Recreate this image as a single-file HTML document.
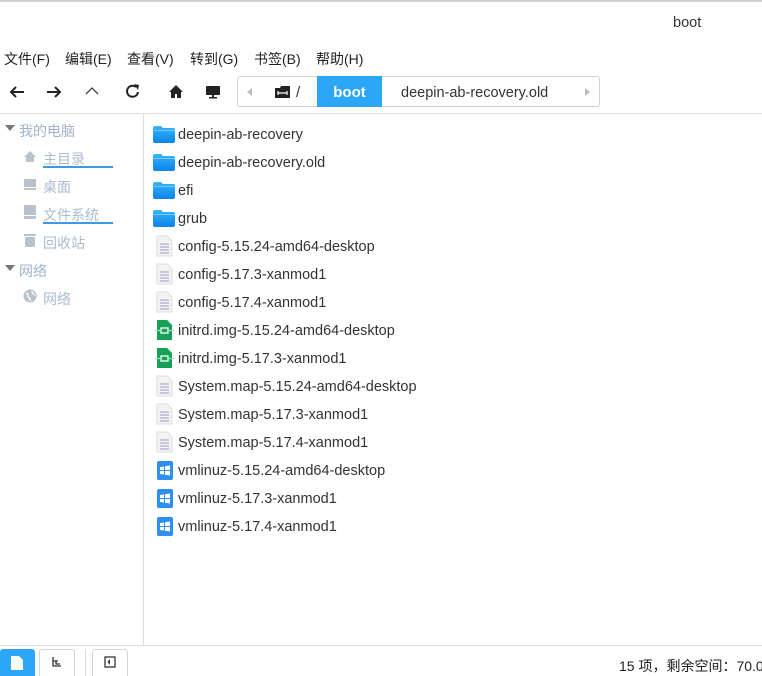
<!DOCTYPE html>
<html><head><meta charset="utf-8"><style>
*{margin:0;padding:0;box-sizing:border-box}
body{width:762px;height:676px;overflow:hidden;background:#fff;font-family:"Liberation Sans","Noto Sans CJK SC",sans-serif;color:#303030;position:relative}
.a{position:absolute}
.menu span{position:absolute;top:49px;font-size:14px;color:#222}
.row{position:absolute;left:153px;height:28px;display:flex;align-items:center;font-size:14.5px;color:#333}
.row span{position:relative;top:1px}
.row svg{margin-right:3px}
.side{position:absolute;font-size:14px;color:#a8bcd0;display:flex;align-items:center}
</style></head><body>
<div class="a" style="left:0;top:0;width:762px;height:2px;background:#cfcfcf"></div>
<div class="a" style="left:673px;top:15px;font-size:14.5px;color:#333">boot</div>
<div class="menu">
<span style="left:4px">文件(F)</span><span style="left:65px">编辑(E)</span><span style="left:127px">查看(V)</span><span style="left:190px">转到(G)</span><span style="left:254px">书签(B)</span><span style="left:316px">帮助(H)</span>
</div>
<svg class="a" style="left:8px;top:84px" width="18" height="16"><path d="M16 8H3M8 3L3 8L8 13" stroke="#222" stroke-width="2" fill="none"/></svg>
<svg class="a" style="left:45px;top:84px" width="18" height="16"><path d="M2 8H15M10 3L15 8L10 13" stroke="#222" stroke-width="2" fill="none"/></svg>
<svg class="a" style="left:84px;top:86px" width="16" height="10"><path d="M2 8L8 2L14 8" stroke="#444" stroke-width="1.3" fill="none"/></svg>
<svg class="a" style="left:125px;top:83px" width="16" height="17"><path d="M13 9A5.5 5.5 0 1 1 11 4" stroke="#222" stroke-width="2" fill="none"/><path d="M9 1L14 2L13 7Z" fill="#222"/></svg>
<svg class="a" style="left:168px;top:84px" width="16" height="15"><path d="M8 1L1 8H3V14H7V10H9V14H13V8H15Z" fill="#222"/></svg>
<svg class="a" style="left:205px;top:85px" width="16" height="14"><rect x="1" y="1" width="14" height="9" rx="1" fill="#222"/><rect x="7" y="10" width="2" height="2" fill="#222"/><rect x="4" y="12" width="8" height="1.5" fill="#222"/></svg>
<div class="a" style="left:237px;top:76px;width:363px;height:31px;border:1px solid #d0d0d0;border-radius:3px;background:#fff"></div>
<svg class="a" style="left:246px;top:87px" width="8" height="10"><path d="M6 1L1 5L6 9Z" fill="#bbb"/></svg>
<svg class="a" style="left:274px;top:85px" width="17" height="14"><path d="M1 3H6L7 1H16V13H1Z" fill="#222"/><path d="M4 8H13M4 6V10M13 6V10" stroke="#fff" stroke-width="1.2"/></svg>
<div class="a" style="left:296px;top:84px;font-size:15px;color:#333">/</div>
<div class="a" style="left:317px;top:76px;width:65px;height:31px;background:#2ca7f8;color:#fff;font-size:15px;font-weight:bold;display:flex;align-items:center;justify-content:center;padding-top:2px">boot</div>
<div class="a" style="left:401px;top:85px;font-size:14.5px;color:#333">deepin-ab-recovery.old</div>
<svg class="a" style="left:583px;top:87px" width="8" height="10"><path d="M2 1L7 5L2 9Z" fill="#bbb"/></svg>
<div class="a" style="left:0;top:113px;width:762px;height:1px;background:#ddd"></div>
<div class="a" style="left:143px;top:114px;width:1px;height:532px;background:#ddd"></div>
<svg class="a" style="left:5px;top:125px" width="10" height="7"><path d="M0 0H10L5 6Z" fill="#777"/></svg>
<div class="side" style="left:19px;top:121px;color:#9fb4c9">我的电脑</div>
<svg class="a" style="left:23px;top:150px" width="14" height="13"><path d="M7 1L1 7H3V12H11V7H13Z" fill="#b8c2cc"/></svg>
<div class="side" style="left:43px;top:149px">主目录</div>
<div class="a" style="left:43px;top:166px;width:70px;height:2px;background:#3a9ae8"></div>
<svg class="a" style="left:23px;top:178px" width="14" height="13"><rect x="1" y="1" width="12" height="11" rx="1" fill="#b8c2cc"/><rect x="1" y="9" width="12" height="1" fill="#fff"/></svg>
<div class="side" style="left:43px;top:177px">桌面</div>
<svg class="a" style="left:24px;top:205px" width="12" height="15"><rect x="0" y="0" width="12" height="14" rx="1" fill="#b8c2cc"/><rect x="0" y="10" width="12" height="1" fill="#fff"/></svg>
<div class="side" style="left:43px;top:205px">文件系统</div>
<div class="a" style="left:43px;top:222px;width:70px;height:2px;background:#3a9ae8"></div>
<svg class="a" style="left:23px;top:233px" width="14" height="15"><rect x="1" y="1" width="12" height="2" fill="#b8c2cc"/><rect x="2" y="4" width="10" height="10" rx="1" fill="#b8c2cc"/></svg>
<div class="side" style="left:43px;top:233px">回收站</div>
<svg class="a" style="left:5px;top:265px" width="10" height="7"><path d="M0 0H10L5 6Z" fill="#777"/></svg>
<div class="side" style="left:19px;top:261px;color:#9fb4c9">网络</div>
<svg class="a" style="left:23px;top:289px" width="14" height="14"><circle cx="7" cy="7" r="6.5" fill="#b8c2cc"/><path d="M3 4Q6 5 5 8Q8 9 7 12M9 2Q9 5 12 6" stroke="#fff" stroke-width="1.3" fill="none"/></svg>
<div class="side" style="left:43px;top:289px">网络</div>
<svg width="0" height="0" style="position:absolute"><defs>
<linearGradient id="fg" x1="0" y1="0" x2="0" y2="1"><stop offset="0" stop-color="#39b4ff"/><stop offset="1" stop-color="#0a84e8"/></linearGradient>
<symbol id="fold" viewBox="0 0 22 20"><path d="M0 4Q0 2 2 2H8L10 4H20Q22 4 22 6V17Q22 19 20 19H2Q0 19 0 17Z" fill="url(#fg)"/><rect x="0" y="6" width="22" height="1" fill="#6ccaff"/></symbol>
<symbol id="txt" viewBox="0 0 22 22"><path d="M4 1H14L19 6V21H4Z" fill="#f4f4f4" stroke="#ddd"/><path d="M7 9H16M7 12H16M7 15H16M7 18H16" stroke="#9b97c8" stroke-width="1"/></symbol>
<symbol id="img" viewBox="0 0 22 22"><path d="M4 1H14L19 6V21H4Z" fill="#16a058"/><rect x="8" y="9" width="7" height="5" fill="none" stroke="#fff" stroke-width="1.3"/><path d="M2 11.5H8M15 11.5H21" stroke="#9fdcb8" stroke-width="1.3"/></symbol>
<symbol id="win" viewBox="0 0 22 22"><rect x="4" y="2" width="16" height="19" rx="2" fill="#2d8ff0"/><path d="M7 8L11 7.5V11H7ZM12 7.3L17 6.5V11H12ZM7 12H11V15.5L7 15ZM12 12H17V16.5L12 15.7Z" fill="#fff"/></symbol>
</defs></svg>
<div class="row" style="top:120px"><svg width="22" height="22"><use href="#fold"/></svg><span>deepin-ab-recovery</span></div>
<div class="row" style="top:148px"><svg width="22" height="22"><use href="#fold"/></svg><span>deepin-ab-recovery.old</span></div>
<div class="row" style="top:176px"><svg width="22" height="22"><use href="#fold"/></svg><span>efi</span></div>
<div class="row" style="top:204px"><svg width="22" height="22"><use href="#fold"/></svg><span>grub</span></div>
<div class="row" style="top:232px"><svg width="22" height="22"><use href="#txt"/></svg><span>config-5.15.24-amd64-desktop</span></div>
<div class="row" style="top:260px"><svg width="22" height="22"><use href="#txt"/></svg><span>config-5.17.3-xanmod1</span></div>
<div class="row" style="top:288px"><svg width="22" height="22"><use href="#txt"/></svg><span>config-5.17.4-xanmod1</span></div>
<div class="row" style="top:316px"><svg width="22" height="22"><use href="#img"/></svg><span>initrd.img-5.15.24-amd64-desktop</span></div>
<div class="row" style="top:344px"><svg width="22" height="22"><use href="#img"/></svg><span>initrd.img-5.17.3-xanmod1</span></div>
<div class="row" style="top:372px"><svg width="22" height="22"><use href="#txt"/></svg><span>System.map-5.15.24-amd64-desktop</span></div>
<div class="row" style="top:400px"><svg width="22" height="22"><use href="#txt"/></svg><span>System.map-5.17.3-xanmod1</span></div>
<div class="row" style="top:428px"><svg width="22" height="22"><use href="#txt"/></svg><span>System.map-5.17.4-xanmod1</span></div>
<div class="row" style="top:456px"><svg width="22" height="22"><use href="#win"/></svg><span>vmlinuz-5.15.24-amd64-desktop</span></div>
<div class="row" style="top:484px"><svg width="22" height="22"><use href="#win"/></svg><span>vmlinuz-5.17.3-xanmod1</span></div>
<div class="row" style="top:512px"><svg width="22" height="22"><use href="#win"/></svg><span>vmlinuz-5.17.4-xanmod1</span></div>
<div class="a" style="left:0;top:645px;width:762px;height:1px;background:#ddd"></div>
<div class="a" style="left:0;top:649px;width:35px;height:27px;background:#2ca7f8;border-radius:3px 3px 0 0"></div>
<svg class="a" style="left:10px;top:655px" width="14" height="16"><path d="M1 1H9L13 5V15H1Z" fill="#fff"/></svg>
<div class="a" style="left:39px;top:649px;width:36px;height:27px;border:1px solid #d4d4d4;border-bottom:none;border-radius:3px 3px 0 0"></div>
<svg class="a" style="left:51px;top:656px" width="12" height="12"><path d="M2 1V10H10M2 5H7M5 5V8H9" stroke="#333" stroke-width="1.3" fill="none"/></svg>
<div class="a" style="left:85px;top:649px;width:1px;height:27px;background:#ddd"></div>
<div class="a" style="left:92px;top:649px;width:36px;height:27px;border:1px solid #d4d4d4;border-bottom:none;border-radius:3px 3px 0 0"></div>
<svg class="a" style="left:104px;top:656px" width="12" height="12"><rect x="1" y="1" width="10" height="10" stroke="#333" stroke-width="1.3" fill="none"/><path d="M6 3L3.5 6L6 9Z" fill="#333"/></svg>
<div class="a" style="left:619px;top:656px;font-size:14px;color:#222;white-space:nowrap">15 项，剩余空间：70.0</div>
</body></html>
